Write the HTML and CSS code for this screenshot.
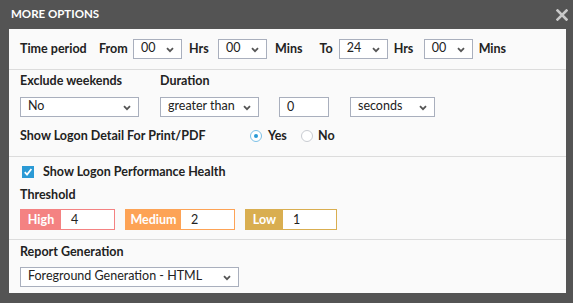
FILE: index.html
```html
<!DOCTYPE html>
<html>
<head>
<meta charset="utf-8">
<link rel="stylesheet" href="styles.css">
</head>
<body>
<div class="dialog">
  <div class="titlebar">
    <span class="title">MORE OPTIONS</span>
    <svg class="close" width="12" height="12" viewBox="0 0 12 12"><path d="M1.5 1.5 L10.5 10.5 M10.5 1.5 L1.5 10.5" stroke="#c8c8c8" stroke-width="2.6" stroke-linecap="square"/></svg>
  </div>
  <div class="panel">
    <div class="sec sec-time">
      <span class="lbl l-tp">Time period</span>
      <span class="lbl l-from">From</span>
      <div class="select s-time"><span>00</span><svg class="chev" width="8" height="6" viewBox="0 0 8 6"><path d="M1 1.2 L4 4.2 L7 1.2" fill="none" stroke="#555" stroke-width="1.8"/></svg></div>
      <span class="lbl l-hrs">Hrs</span>
      <div class="select s-time"><span>00</span><svg class="chev" width="8" height="6" viewBox="0 0 8 6"><path d="M1 1.2 L4 4.2 L7 1.2" fill="none" stroke="#555" stroke-width="1.8"/></svg></div>
      <span class="lbl l-mins">Mins</span>
      <span class="lbl l-to">To</span>
      <div class="select s-time"><span>24</span><svg class="chev" width="8" height="6" viewBox="0 0 8 6"><path d="M1 1.2 L4 4.2 L7 1.2" fill="none" stroke="#555" stroke-width="1.8"/></svg></div>
      <span class="lbl l-hrs2">Hrs</span>
      <div class="select s-time"><span>00</span><svg class="chev" width="8" height="6" viewBox="0 0 8 6"><path d="M1 1.2 L4 4.2 L7 1.2" fill="none" stroke="#555" stroke-width="1.8"/></svg></div>
      <span class="lbl l-mins2">Mins</span>
    </div>

    <div class="sec sec-dur">
      <div class="grid">
        <span class="lbl">Exclude weekends</span>
        <span class="lbl">Duration</span>
        <span></span>
        <span></span>
        <div class="select s-excl"><span>No</span><svg class="chev" width="8" height="6" viewBox="0 0 8 6"><path d="M1 1.2 L4 4.2 L7 1.2" fill="none" stroke="#555" stroke-width="1.8"/></svg></div>
        <div class="select s-gt"><span>greater than</span><svg class="chev" width="8" height="6" viewBox="0 0 8 6"><path d="M1 1.2 L4 4.2 L7 1.2" fill="none" stroke="#555" stroke-width="1.8"/></svg></div>
        <div class="input i-zero">0</div>
        <div class="select s-sec"><span>seconds</span><svg class="chev" width="8" height="6" viewBox="0 0 8 6"><path d="M1 1.2 L4 4.2 L7 1.2" fill="none" stroke="#555" stroke-width="1.8"/></svg></div>
      </div>
      <div class="radio-row">
        <span class="lbl l-logon">Show Logon Detail For Print/PDF</span>
        <span class="radio checked"></span><span class="lbl r-yes">Yes</span>
        <span class="radio"></span><span class="lbl r-no">No</span>
      </div>
    </div>

    <div class="sec sec-health">
      <div class="check-row">
        <span class="checkbox"><svg width="12" height="12" viewBox="0 0 12 12"><path d="M2.8 6.2 L5 8.6 L9.4 3" fill="none" stroke="#fff" stroke-width="1.8"/></svg></span>
        <span class="lbl">Show Logon Performance Health</span>
      </div>
      <div class="lbl th-title">Threshold</div>
      <div class="pills">
        <div class="pill p-high"><span class="tag">High</span><span class="val">4</span></div>
        <div class="pill p-med"><span class="tag">Medium</span><span class="val">2</span></div>
        <div class="pill p-low"><span class="tag">Low</span><span class="val">1</span></div>
      </div>
    </div>

    <div class="sec sec-report">
      <div class="lbl">Report Generation</div>
      <div class="select s-report"><span>Foreground Generation - HTML</span><svg class="chev" width="8" height="6" viewBox="0 0 8 6"><path d="M1 1.2 L4 4.2 L7 1.2" fill="none" stroke="#555" stroke-width="1.8"/></svg></div>
    </div>
  </div>
</div>
</body>
</html>
```
FILE: styles.css
```css
* { box-sizing: border-box; }
html, body { margin: 0; padding: 0; }
body {
  background: #545454;
  font-family: "Lato", "Noto Sans", sans-serif;
  font-size: 12.5px;
  color: #222;
}
.dialog {
  width: 573px;
  height: 303px;
  background: #545454;
}
.titlebar {
  height: 29px;
  display: flex;
  align-items: center;
  justify-content: space-between;
  padding: 0 5px 2px 11px;
}
.title {
  color: #fff;
  font-weight: 700;
  font-size: 11.5px;
}
.close { display: block; margin-top: 2px; }
.panel {
  margin: 0 7px 0 9px;
  height: 264px;
  background: #fafafa;
}
.sec { padding: 0 11px; border-bottom: 1px solid #dcdcdc; }
.sec:last-child { border-bottom: none; }
.lbl { font-weight: 700; color: #222; line-height: 14px; white-space: nowrap; flex-shrink: 0; }

.select {
  height: 20px;
  border: 1px solid #a9afbd;
  background: #fff;
  display: flex;
  align-items: center;
  justify-content: space-between;
  padding: 0 7px 0 7px;
  color: #222;
  font-weight: 400;
  flex-shrink: 0;
}
.select span { line-height: 14px; margin-top: -2px; }
.chev { display: block; margin-top: 1px; }

.sec-time {
  height: 41px;
  display: flex;
  align-items: center;
}
.s-time { width: 49px; }
.l-tp { width: 79px; }
.l-from { width: 34px; }
.l-hrs { margin-left: 7px; width: 29px; }
.l-mins { margin-left: 8px; margin-right: 17px; }
.l-to { margin-right: 6px; }
.l-hrs2 { margin-left: 6px; width: 30px; }
.l-mins2 { margin-left: 6px; }

.sec-dur { padding-top: 4px; padding-bottom: 12px; }
.grid {
  display: grid;
  grid-template-columns: 140px 119px 71px 85px;
  row-gap: 9px;
}
.s-excl { width: 119px; }
.s-gt { width: 99px; }
.input {
  width: 50px;
  height: 20px;
  border: 1px solid #a9afbd;
  background: #fff;
  padding: 0 7px;
  line-height: 17px;
}
.s-sec { width: 85px; }
.radio-row {
  margin-top: 11px;
  height: 16px;
  display: flex;
  align-items: center;
}
.l-logon { width: 230px; }
.radio {
  width: 12px;
  height: 12px;
  border-radius: 50%;
  border: 1px solid #c9ccd2;
  background: #fff;
  position: relative;
  flex-shrink: 0;
}
.radio.checked { border-color: #7cc0e6; }
.radio.checked::after {
  content: "";
  position: absolute;
  left: 3px; top: 3px;
  width: 4px; height: 4px;
  border-radius: 50%;
  background: #2a9ad6;
}
.r-yes { margin-left: 6px; width: 33px; }
.r-no { margin-left: 5px; }

.sec-health { padding-top: 7px; padding-bottom: 9px; }
.check-row { height: 16px; display: flex; align-items: center; padding-left: 2px; }
.checkbox {
  width: 12px;
  height: 12px;
  background: #2b9ad5;
  margin-right: 9px;
  display: block;
  flex-shrink: 0;
}
.checkbox svg { display: block; }
.th-title { margin-top: 8px; }
.pills { display: flex; gap: 10px; margin-top: 7px; }
.pill {
  height: 21px;
  display: flex;
  border: 1px solid;
  background: #fff;
}
.tag {
  color: #fff;
  font-weight: 700;
  display: flex;
  align-items: center;
  justify-content: center;
  line-height: 14px;
}
.val { padding-left: 10px; display: flex; align-items: center; }
.p-high { width: 95px; border-color: #f48282; }
.p-high .tag { width: 40px; background: #f48282; }
.p-med { width: 110px; border-color: #fda356; }
.p-med .tag { width: 55px; background: #fda356; }
.p-low { width: 92px; border-color: #d9ae50; }
.p-low .tag { width: 37px; background: #d9ae50; }

.sec-report { padding-top: 5px; }
.sec-report .select { margin-top: 8px; width: 219px; }
```
